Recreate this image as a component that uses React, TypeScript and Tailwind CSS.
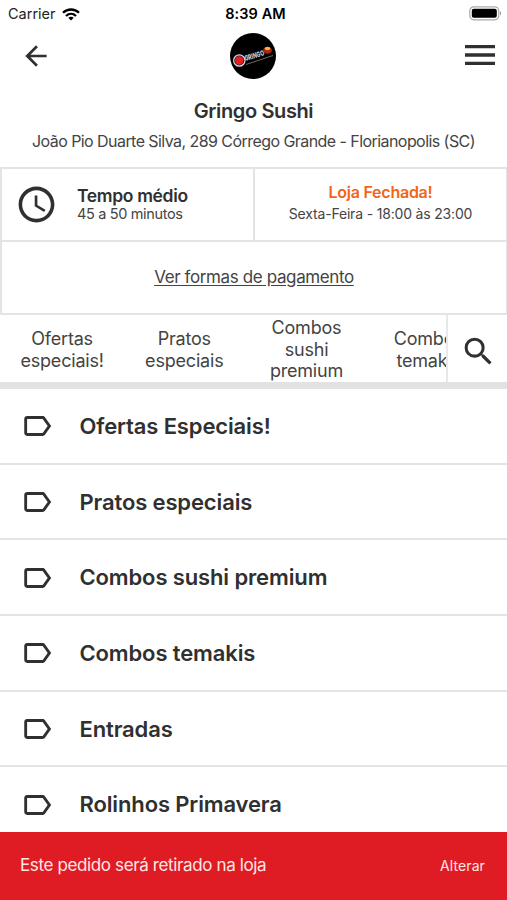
import { MdAccessTime, MdArrowBack, MdLabelOutline, MdMenu, MdSearch } from 'react-icons/md'

const TABS = ['Ofertas especiais!', 'Pratos especiais', 'Combos sushi premium', 'Combos temakis']

const CATEGORIES = [
  'Ofertas Especiais!',
  'Pratos especiais',
  'Combos sushi premium',
  'Combos temakis',
  'Entradas',
  'Rolinhos Primavera',
]

export default function App() {
  return (
    <div className="flex flex-col w-full h-[900px] overflow-hidden bg-white text-[#303030] font-['Inter','Liberation_Sans',sans-serif]">
      <StatusBar />
      <Header />
      <StoreInfo />
      <CategoryTabs />

      <main className="flex-1 min-h-0 overflow-hidden">
        {CATEGORIES.map((name) => (
          <CategoryRow key={name} name={name} />
        ))}
      </main>

      <footer className="h-[68.5px] shrink-0 flex items-center justify-between pl-5 pr-[22px] bg-[#df1c24] text-[#ffe6e6]">
        <span className="text-[17px] tracking-[-0.37px]">Este pedido será retirado na loja</span>
        <button type="button" className="text-sm tracking-[0.1px]">
          Alterar
        </button>
      </footer>
    </div>
  )
}

function StatusBar() {
  return (
    <div className="h-7 shrink-0 grid grid-cols-3 items-center pl-2 pr-[5px] text-black text-[14.5px] leading-7">
      <div className="flex items-center gap-1.5">
        <span className="text-[#222]">Carrier</span>
        <WifiIcon />
      </div>
      <span className="pl-px text-center font-semibold tracking-[0.1px]">8:39 AM</span>
      <div className="flex justify-end pb-0.5">
        <BatteryIcon />
      </div>
    </div>
  )
}

function Header() {
  return (
    <header className="h-[139px] shrink-0">
      <div className="h-[55px] grid grid-cols-3 items-center px-[7px]">
        <button type="button" aria-label="Voltar" className="pl-[13px]">
          <MdArrowBack className="size-8" />
        </button>
        <div className="flex justify-center">
          <Logo />
        </div>
        <button type="button" aria-label="Menu" className="flex justify-end pb-0.5">
          <MdMenu className="size-10" />
        </button>
      </div>
      <h1 className="mt-3.5 text-center text-xl leading-7 font-semibold tracking-[-0.38px]">Gringo Sushi</h1>
      <p className="mt-1 text-center text-base leading-6 tracking-[-0.56px] text-[#444] whitespace-nowrap">
        João Pio Duarte Silva, 289 Córrego Grande - Florianopolis (SC)
      </p>
    </header>
  )
}

function StoreInfo() {
  return (
    <section className="shrink-0 h-[148px] flex flex-col border-2 border-r border-[#e4e4e4]">
      <div className="h-[73px] flex border-b-2 border-[#e4e4e4]">
        <div className="w-[253px] flex items-center pl-[13px] border-r-2 border-[#e4e4e4]">
          <MdAccessTime className="size-[43px] shrink-0" />
          <div className="ml-[19px] pb-px">
            <p className="text-[17.5px] leading-[18px] font-semibold tracking-[-0.35px]">Tempo médio</p>
            <p className="text-[14.5px] leading-[17px] tracking-[-0.35px] text-[#444]">45 a 50 minutos</p>
          </div>
        </div>
        <div className="flex-1 pt-3 text-center">
          <p className="text-base leading-[22px] font-semibold tracking-[-0.25px] text-[#f26419]">
            Loja Fechada!
          </p>
          <p className="text-sm leading-[22px] tracking-[-0.18px] text-[#444]">Sexta-Feira - 18:00 às 23:00</p>
        </div>
      </div>
      <div className="flex-1 flex items-center justify-center">
        <a href="#pagamento" className="text-[17px] tracking-[-0.38px] underline underline-offset-2 text-[#444]">
          Ver formas de pagamento
        </a>
      </div>
    </section>
  )
}

function CategoryTabs() {
  return (
    <nav className="shrink-0 h-[74px] flex border-b-[7px] border-[#e2e2e2]">
      <div className="w-[446px] flex pt-0.5 pl-px overflow-hidden">
        {TABS.map((tab) => (
          <button
            key={tab}
            type="button"
            className="w-[122.2px] shrink-0 px-4 text-center text-[18px] leading-[21.5px] tracking-[-0.2px] text-[#444]"
          >
            {tab}
          </button>
        ))}
      </div>
      <button
        type="button"
        aria-label="Buscar"
        className="flex-1 flex items-center justify-center pt-1.5 pl-0.5 border-l-2 border-[#e8e8e8]"
      >
        <MdSearch className="size-[37px]" />
      </button>
    </nav>
  )
}

function CategoryRow({ name }: { name: string }) {
  return (
    <div className="h-[75.7px] flex items-center pt-px pl-5 border-b-[2.5px] border-[#e4e4e4]">
      <MdLabelOutline className="size-[34px] shrink-0" />
      <span className="ml-[25.5px] text-[22px] font-semibold tracking-[-0.13px]">{name}</span>
    </div>
  )
}

function WifiIcon() {
  return (
    <svg viewBox="0 0 18 13" className="w-[18px] h-[13px]" fill="none" stroke="black" strokeWidth="2.3">
      <path d="M1 4.8C5.5 0.4 12.5 0.4 17 4.8" />
      <path d="M4 8C7 5.2 11 5.2 14 8" />
      <path d="M9 12.6L6.3 9.8C7.8 8.5 10.2 8.5 11.7 9.8Z" fill="black" stroke="none" />
    </svg>
  )
}

function BatteryIcon() {
  return (
    <svg viewBox="0 0 33 15" className="w-[33px] h-[15px]">
      <rect x="0.8" y="0.8" width="29" height="13" rx="4" fill="none" stroke="#aaa" strokeWidth="1.2" />
      <rect x="2.8" y="2.8" width="25" height="9" rx="2" fill="black" />
      <path d="M31 5.3C32.5 6 32.5 8.8 31 9.5Z" fill="#999" />
    </svg>
  )
}

function Logo() {
  return (
    <svg viewBox="0 0 46 46" className="size-[46px]">
      <circle cx="23" cy="23" r="23" fill="black" />
      <path d="M16 31.5L43 22.5" stroke="#777" strokeWidth="0.9" />
      <text
        x="15.5"
        y="28"
        transform="rotate(-17 15.5 28)"
        fill="#ccc"
        fontSize="7.5"
        fontWeight="800"
        textLength="20"
        lengthAdjust="spacingAndGlyphs"
      >
        GRINGO
      </text>
      <circle cx="9.3" cy="27.5" r="6.3" fill="#ddd" />
      <circle cx="9.3" cy="27.5" r="5.1" fill="#222" />
      <circle cx="9.3" cy="27.5" r="4.2" fill="#ed1c24" />
      <ellipse cx="37.5" cy="17.3" rx="4.3" ry="3.4" fill="#a72716" />
      <ellipse cx="37.5" cy="15.5" rx="2.8" ry="1.7" fill="#f5b642" />
    </svg>
  )
}
